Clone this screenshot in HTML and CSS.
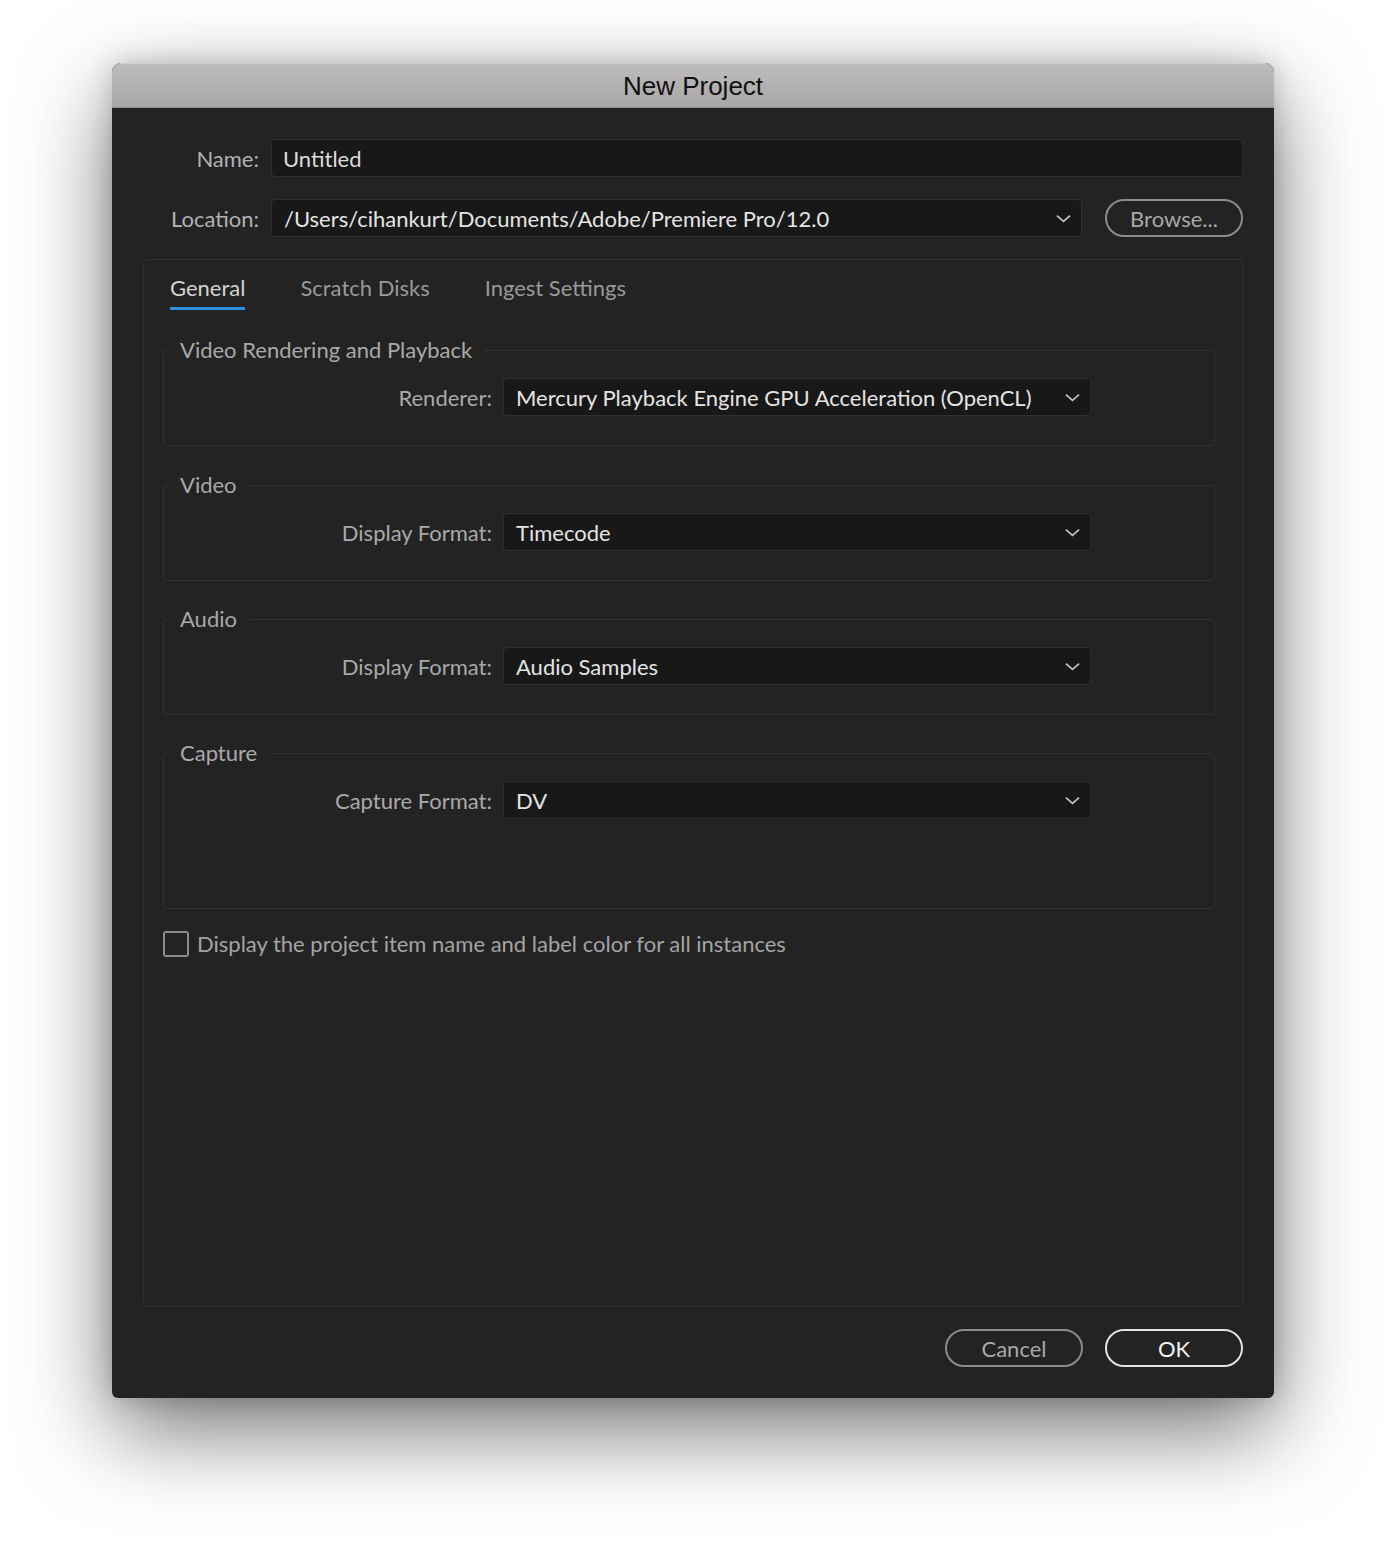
FILE: index.html
```html
<!DOCTYPE html>
<html lang="en">
<head>
  <meta charset="UTF-8">
  <meta name="viewport" content="width=device-width, initial-scale=1.0">
  <title>New Project</title>
  <link rel="stylesheet" href="styles.css">
</head>
<body>

<div class="window">
  <div class="titlebar">New Project</div>

  <div class="dialog">
    <div class="row">
      <label class="row-label">Name:</label>
      <div class="field input">Untitled</div>
    </div>

    <div class="row">
      <label class="row-label">Location:</label>
      <div class="field select">
        <span>/Users/cihankurt/Documents/Adobe/Premiere Pro/12.0</span>
        <svg class="chevron" viewBox="0 0 16 9"><path d="M1 1.5 L8 7.5 L15 1.5"/></svg>
      </div>
      <button class="pill">Browse...</button>
    </div>

    <div class="panel">
      <div class="tabs">
        <span class="tab active">General</span>
        <span class="tab">Scratch Disks</span>
        <span class="tab">Ingest Settings</span>
      </div>

      <fieldset class="group">
        <legend>Video Rendering and Playback</legend>
        <div class="group-row">
          <span class="group-label">Renderer:</span>
          <div class="field select">
            <span>Mercury Playback Engine GPU Acceleration (OpenCL)</span>
            <svg class="chevron" viewBox="0 0 16 9"><path d="M1 1.5 L8 7.5 L15 1.5"/></svg>
          </div>
        </div>
      </fieldset>

      <fieldset class="group">
        <legend>Video</legend>
        <div class="group-row">
          <span class="group-label">Display Format:</span>
          <div class="field select">
            <span>Timecode</span>
            <svg class="chevron" viewBox="0 0 16 9"><path d="M1 1.5 L8 7.5 L15 1.5"/></svg>
          </div>
        </div>
      </fieldset>

      <fieldset class="group">
        <legend>Audio</legend>
        <div class="group-row">
          <span class="group-label">Display Format:</span>
          <div class="field select">
            <span>Audio Samples</span>
            <svg class="chevron" viewBox="0 0 16 9"><path d="M1 1.5 L8 7.5 L15 1.5"/></svg>
          </div>
        </div>
      </fieldset>

      <fieldset class="group group-tall">
        <legend>Capture</legend>
        <div class="group-row">
          <span class="group-label">Capture Format:</span>
          <div class="field select">
            <span>DV</span>
            <svg class="chevron" viewBox="0 0 16 9"><path d="M1 1.5 L8 7.5 L15 1.5"/></svg>
          </div>
        </div>
      </fieldset>

      <label class="check">
        <span class="box"></span>
        Display the project item name and label color for all instances
      </label>
    </div>

    <div class="actions">
      <button class="pill">Cancel</button>
      <button class="pill primary">OK</button>
    </div>
  </div>
</div>

</body>
</html>
```

FILE: styles.css
```css
body {
  margin: 0;
  padding: 63px 0 160px;
  background-color: #fff;
  font-family: Lato, "Open Sans", sans-serif;
}
.window {
  width: 1162px;
  margin: 0 auto;
  border-radius: 9px 9px 6px 6px;
  overflow: hidden;
  background-color: #232323;
  box-shadow: 0 32px 90px rgba(0, 0, 0, 0.55), 0 0 24px rgba(0, 0, 0, 0.18);
}
.titlebar {
  height: 43px;
  line-height: 45px;
  text-align: center;
  font-family: "Liberation Sans", Arial, sans-serif;
  font-size: 26px;
  color: #111;
  background: linear-gradient(#bebcbc, #a8a6a6);
  border-top: 1px solid #d0cece;
  border-bottom: 1px solid #8c8a8a;
}
.dialog {
  padding: 31px 31px 31px;
}
.row {
  display: flex;
  align-items: center;
  margin-bottom: 22px;
}
.row-label {
  width: 116px;
  margin-right: 12px;
  text-align: right;
  font-size: 22px;
  color: #b2b2b2;
}
.field {
  box-sizing: border-box;
  height: 38px;
  display: flex;
  align-items: center;
  padding: 0 11px;
  background-color: #181818;
  border: 1px solid #2f2f2f;
  border-radius: 4px;
  font-size: 22px;
  color: #dcdcdc;
}
.row .input {
  flex: 1;
}
.row .select {
  flex: 1;
  margin-right: 23px;
}
.select {
  justify-content: space-between;
  padding-left: 12px;
  padding-right: 10px;
  color: #e4e4e4;
}
.chevron {
  width: 15px;
  height: 9px;
  fill: none;
  stroke: #c4c4c4;
  stroke-width: 1.8;
}
.pill {
  box-sizing: border-box;
  width: 138px;
  height: 38px;
  border: 2px solid #8c8c8c;
  border-radius: 19px;
  background: transparent;
  font-family: Lato, "Open Sans", sans-serif;
  font-size: 22px;
  color: #a8a8a8;
  padding: 0;
}
.pill.primary {
  border-color: #e2e2e2;
  color: #f2f2f2;
}
.panel {
  box-sizing: border-box;
  height: 1048px;
  border: 1px solid #313131;
  border-radius: 4px;
  padding: 0 27px 0 19px;
}
.tabs {
  display: flex;
  gap: 55px;
  padding: 13px 0 0 7px;
  height: 77px;
  box-sizing: border-box;
}
.tab {
  font-size: 22px;
  color: #999;
  height: 37px;
  line-height: 30px;
  box-sizing: border-box;
}
.tab.active {
  color: #d4d4d4;
  border-bottom: 3px solid #2f8de4;
}
.group {
  margin: 0 0 25px;
  padding: 15px 0 29px;
  border: 1px solid #313131;
  border-radius: 4px;
}
.group:first-of-type {
  margin-bottom: 26px;
}
.group-tall {
  padding-bottom: 89px;
  margin-bottom: 21px;
}
.group legend {
  margin-left: 6px;
  padding: 0 12px 0 10px;
  font-size: 22px;
  line-height: 26px;
  color: #a9a9a9;
}
.group-row {
  display: flex;
  align-items: center;
}
.group-label {
  width: 328px;
  margin-right: 11px;
  text-align: right;
  font-size: 22px;
  color: #a9a9a9;
}
.group-row .select {
  width: 588px;
}
.check {
  display: flex;
  align-items: center;
  font-size: 22px;
  color: #a4a4a4;
}
.box {
  box-sizing: border-box;
  width: 26px;
  height: 26px;
  margin-right: 8px;
  border: 2px solid #8a8a8a;
  border-radius: 3px;
}
.actions {
  display: flex;
  justify-content: flex-end;
  gap: 22px;
  margin-top: 22px;
}
```
